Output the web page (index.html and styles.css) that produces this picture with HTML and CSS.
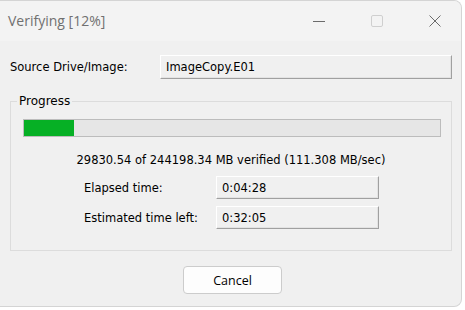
FILE: index.html
```html
<!DOCTYPE html>
<html>
<head>
<meta charset="utf-8">
<link rel="stylesheet" href="styles.css">
</head>
<body>
<div class="window">
  <div class="titlebar">
    <span class="title">Verifying [12%]</span>
    <div class="controls">
      <span class="ctl"><svg width="12" height="12" viewBox="0 0 12 12"><path d="M0 6.5h12" stroke="#6b6b6b" stroke-width="1"/></svg></span>
      <span class="ctl"><svg width="12" height="12" viewBox="0 0 12 12"><rect x="0.5" y="0.5" width="11" height="11" rx="1.5" fill="none" stroke="#cfcfcf"/></svg></span>
      <span class="ctl"><svg width="12" height="12" viewBox="0 0 12 12"><path d="M0.5 0.5l11 11M11.5 0.5l-11 11" stroke="#6b6b6b" stroke-width="1"/></svg></span>
    </div>
  </div>
  <div class="content">
    <div class="source-row">
      <span class="label source-label">Source Drive/Image:</span>
      <div class="field source-field">ImageCopy.E01</div>
    </div>
    <fieldset class="group">
      <legend>Progress</legend>
      <div class="bar"><div class="fill" style="width:12%"></div></div>
      <div class="status">29830.54 of 244198.34 MB verified (111.308 MB/sec)</div>
      <div class="times">
        <span class="label">Elapsed time:</span>
        <div class="field">0:04:28</div>
        <span class="label">Estimated time left:</span>
        <div class="field">0:32:05</div>
      </div>
    </fieldset>
    <div class="actions">
      <button class="btn">Cancel</button>
    </div>
  </div>
</div>
</body>
</html>
```
FILE: styles.css
```css
html, body {
  margin: 0;
  padding: 0;
  background: #ffffff;
}
.window {
  width: 462px;
  height: 307px;
  box-sizing: border-box;
  background: #f0f0f0;
  border: 1px solid #d4d4d4;
  border-left: none;
  border-radius: 0 8px 8px 0;
  overflow: hidden;
  font-family: "DejaVu Sans", Verdana, sans-serif;
  font-size: 11.5px;
  color: #000;
}
.titlebar {
  height: 40px;
  background: #f3f3f3;
  display: flex;
  align-items: center;
  justify-content: space-between;
  padding-left: 8px;
}
.title {
  font-family: "Open Sans", "Noto Sans", sans-serif;
  font-size: 14px;
  color: #707070;
  padding-bottom: 2px;
}
.controls {
  display: flex;
  align-items: center;
  gap: 46px;
  padding-right: 20px;
}
.ctl {
  display: flex;
  width: 12px;
  height: 12px;
}
.content {
  padding: 14px 9px 0 10px;
}
.source-row {
  display: flex;
  align-items: center;
  height: 24px;
}
.source-label {
  width: 150px;
}
.field {
  box-sizing: border-box;
  height: 23px;
  background: #f0f0f0;
  border-top: 1px solid #ffffff;
  border-left: 1px solid #ffffff;
  border-right: 1px solid #a0a0a0;
  border-bottom: 1px solid #a0a0a0;
  box-shadow: inset -1px -1px 0 #e3e3e3;
  display: flex;
  align-items: center;
  padding-left: 5px;
}
.source-field {
  width: 292px;
  height: 24px;
}
.group {
  margin: 15px 0 0 0;
  padding: 10px 10px 0 12px;
  height: 157px;
  box-sizing: border-box;
  border: 1px solid #dcdcdc;
  min-width: 0;
}
.group legend {
  padding: 0 2px;
  margin-left: -6px;
  font-size: 12px;
}
.bar {
  height: 18px;
  box-sizing: border-box;
  border: 1px solid #bcbcbc;
  background: #e6e6e6;
  margin-top: 1px;
}
.fill {
  height: 100%;
  background: #06b025;
}
.status {
  text-align: center;
  margin-top: 16px;
  margin-right: 2px;
  line-height: 14px;
}
.times {
  display: grid;
  grid-template-columns: 132px 163px;
  row-gap: 7px;
  align-items: center;
  margin: 9px 0 0 61px;
}
.times .field {
  height: 23px;
}
.actions {
  display: flex;
  justify-content: center;
  padding-top: 15px;
  padding-left: 3px;
}
.btn {
  width: 99px;
  height: 28px;
  background: #fdfdfd;
  border: 1px solid #cccccc;
  border-radius: 4px;
  font-family: "Open Sans", "Noto Sans", sans-serif;
  font-size: 12.5px;
  color: #000;
}
```
